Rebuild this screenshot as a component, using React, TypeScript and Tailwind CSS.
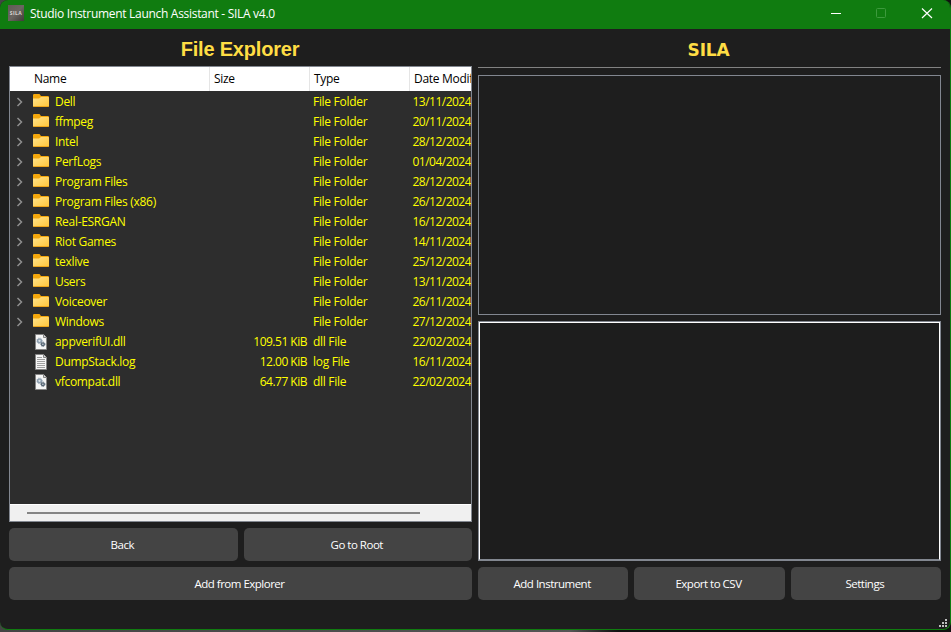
import React from "react";

type Kind = "folder" | "dll" | "log";
type Entry = { name: string; kind: Kind; size?: string; date: string };

const entries: Entry[] = [
  { name: "Dell", kind: "folder", date: "13/11/2024" },
  { name: "ffmpeg", kind: "folder", date: "20/11/2024" },
  { name: "Intel", kind: "folder", date: "28/12/2024" },
  { name: "PerfLogs", kind: "folder", date: "01/04/2024" },
  { name: "Program Files", kind: "folder", date: "28/12/2024" },
  { name: "Program Files (x86)", kind: "folder", date: "26/12/2024" },
  { name: "Real-ESRGAN", kind: "folder", date: "16/12/2024" },
  { name: "Riot Games", kind: "folder", date: "14/11/2024" },
  { name: "texlive", kind: "folder", date: "25/12/2024" },
  { name: "Users", kind: "folder", date: "13/11/2024" },
  { name: "Voiceover", kind: "folder", date: "26/11/2024" },
  { name: "Windows", kind: "folder", date: "27/12/2024" },
  { name: "appverifUI.dll", kind: "dll", size: "109.51 KiB", date: "22/02/2024" },
  { name: "DumpStack.log", kind: "log", size: "12.00 KiB", date: "16/11/2024" },
  { name: "vfcompat.dll", kind: "dll", size: "64.77 KiB", date: "22/02/2024" },
];

const typeNames: Record<Kind, string> = {
  folder: "File Folder",
  dll: "dll File",
  log: "log File",
};

function FolderIcon() {
  return (
    <svg width="16" height="16" viewBox="0 0 16 16" className="mb-[2px] block">
      <defs>
        <linearGradient id="folderFront" x1="0" y1="0" x2="1" y2="1">
          <stop offset="0" stopColor="#ffe38c" />
          <stop offset="1" stopColor="#ffc63a" />
        </linearGradient>
      </defs>
      <path d="M0 3.500V2.200Q0 1 1.200 1H6.500l1.500 2h6.800Q16 3 16 4.200V6H0z" fill="#f5a80c" />
      <path d="M0 5.500H6L8 4h7Q16 4 16 5v7.800Q16 14 14.800 14H1.200Q0 14 0 12.800z" fill="url(#folderFront)" />
      <path d="M.5 13.500h15" stroke="#eda51b" />
    </svg>
  );
}

function DocIcon({ kind }: { kind: Kind }) {
  return (
    <svg width="16" height="16" viewBox="0 0 16 16" className="mb-px block">
      <path d="M2.500.5h8l3 3v12h-11z" fill="#f6f6f6" stroke="#858585" />
      <path d="M10.500.5v3h3" fill="#d8d8d8" stroke="#858585" />
      {kind === "log" ? (
        <path d="M4 3.500h5M4 5.500h8M4 7.500h8M4 9.500h8M4 11.500h8M4 13.500h8" stroke="#a0a0a0" />
      ) : (
        <>
          <circle cx="6.500" cy="6.800" r="1.900" fill="#dde3e8" stroke="#8fa0b0" strokeWidth="1.500" />
          <circle cx="6.500" cy="6.800" r="2.800" fill="none" stroke="#8fa0b0" strokeWidth=".7" strokeDasharray="1.100 1.200" />
          <circle cx="9.900" cy="10.300" r="1.400" fill="#dde3e8" stroke="#566675" strokeWidth="1.400" />
          <circle cx="9.900" cy="10.300" r="2.200" fill="none" stroke="#566675" strokeWidth=".7" strokeDasharray="1 .9" />
        </>
      )}
    </svg>
  );
}

function Row({ entry }: { entry: Entry }) {
  return (
    <div className="flex h-5 items-center text-[12px] leading-5 text-[#ffff00]">
      <div className="flex w-[199px] shrink-0 items-center">
        <div className="w-[23px] shrink-0 pl-[6px]">
          {entry.kind === "folder" && (
            <svg width="8" height="10" viewBox="0 0 8 10" className="mb-px block">
              <path d="M1.500 1 5.500 5l-4 4" fill="none" stroke="#8f8f8f" strokeWidth="1.500" />
            </svg>
          )}
        </div>
        {entry.kind === "folder" ? <FolderIcon /> : <DocIcon kind={entry.kind} />}
        <span className="ml-[6px] tracking-[-0.3px]">{entry.name}</span>
      </div>
      <span className="w-[98px] shrink-0 text-right tracking-[-0.5px]">{entry.size}</span>
      <span className="ml-[6px] w-[99.500px] shrink-0 tracking-[-0.3px]">{typeNames[entry.kind]}</span>
      <span className="tracking-[-0.52px]">{entry.date}</span>
    </div>
  );
}

function Button({ label }: { label: string }) {
  return (
    <button className="h-[33px] min-w-0 flex-1 rounded-[5px] bg-[#444444] pr-[2px] pt-px text-center text-[11.500px] tracking-[-0.5px] text-white">
      {label}
    </button>
  );
}

function TitleBar() {
  return (
    <header className="flex h-[29px] shrink-0 items-center bg-[#107c10] pl-2">
      <div className="mb-[3px] flex h-4 w-4 items-center justify-center bg-gradient-to-br from-[#5f5a55] via-[#6b6661] to-[#403c39] text-[5px] font-bold leading-none tracking-[0.4px] text-[#d8d4d0]">
        SILA
      </div>
      <span className="mb-[2px] ml-[6px] text-[12px] tracking-[-0.3px] text-white">
        Studio Instrument Launch Assistant - SILA v4.0
      </span>
      <svg width="119" height="29" viewBox="0 0 119 29" className="ml-auto" fill="none">
        <path d="M0 13.500h10" stroke="#fff" />
        <rect x="45.500" y="8.500" width="9" height="9" rx="1" stroke="#3d9a3d" />
        <path d="m91 8.500 10 9.500m0-9.500L91 18" stroke="#fff" strokeWidth="1.200" />
      </svg>
    </header>
  );
}

function FileTree() {
  return (
    <div className="flex h-[456px] flex-col overflow-hidden whitespace-nowrap border border-[#828790] bg-[#2d2d2d]">
      <div className="flex h-6 shrink-0 bg-white text-[12px] leading-[24px] tracking-[-0.3px] text-black">
        <span className="w-[200px] shrink-0 border-r border-[#e5e5e5] pl-6">Name</span>
        <span className="w-[100px] shrink-0 border-r border-[#e5e5e5] pl-[4px]">Size</span>
        <span className="w-[100px] shrink-0 border-r border-[#e5e5e5] pl-[4px]">Type</span>
        <span className="pl-[4px]">Date Modified</span>
      </div>
      <div className="min-h-0 flex-1 pt-px">
        {entries.map((e) => (
          <Row key={e.name} entry={e} />
        ))}
      </div>
      <div className="flex h-[17px] shrink-0 items-center border-t border-white bg-[#f0f0f0] pl-[17px]">
        <div className="h-[2px] w-[393px] bg-[#858585]" />
      </div>
    </div>
  );
}

export default function App() {
  return (
    <div className="h-[632px] w-[951px] overflow-hidden bg-gradient-to-r from-[#444444] via-[#555555] via-60% to-[#111111] to-65% font-['Open_Sans','Noto_Sans',sans-serif]">
      <div className="flex h-[630px] flex-col overflow-hidden rounded-[8px] border-b border-r border-[#107c10] bg-[#1e1e1e]">
        <TitleBar />
        <main className="flex gap-[6px] pl-[9px]">
          <section className="w-[463px]">
            <h1 className="h-[37px] pr-px pt-[5px] text-center font-['Liberation_Sans',Arial,sans-serif] text-[20px] font-bold leading-[30px] tracking-[-0.2px] text-[#ffdd44]">
              File Explorer
            </h1>
            <FileTree />
            <div className="mt-[6px] flex gap-[6px]">
              <Button label="Back" />
              <Button label="Go to Root" />
            </div>
            <div className="mt-[6px] flex">
              <Button label="Add from Explorer" />
            </div>
          </section>
          <section className="w-[463px]">
            <h1 className="h-[38px] pr-[2px] pt-[6px] text-center font-['DejaVu_Sans',Verdana,sans-serif] text-[17px] font-bold leading-[31px] tracking-[-0.2px] text-[#ffdd44]">
              SILA
            </h1>
            <div className="h-px bg-[#828282]" />
            <div className="mt-[7px] h-[240px] border border-[#828790]" />
            <div className="mt-[6px] h-[240px] border border-[#828790]">
              <div className="h-full border border-white border-b-[#828790] bg-[#1d1d1d]" />
            </div>
            <div className="mt-[6px] flex gap-[6px]">
              <Button label="Add Instrument" />
              <Button label="Export to CSV" />
              <Button label="Settings" />
            </div>
          </section>
        </main>
        <footer className="flex flex-1 items-end justify-end pb-[2px] pr-[3px]">
          <svg width="8" height="8" viewBox="0 0 8 8" fill="#bfbfbf">
            <path d="M6 0h2v2H6zM3 3h2v2H3zM6 3h2v2H6zM0 6h2v2H0zM3 6h2v2H3zM6 6h2v2H6z" />
          </svg>
        </footer>
      </div>
    </div>
  );
}
